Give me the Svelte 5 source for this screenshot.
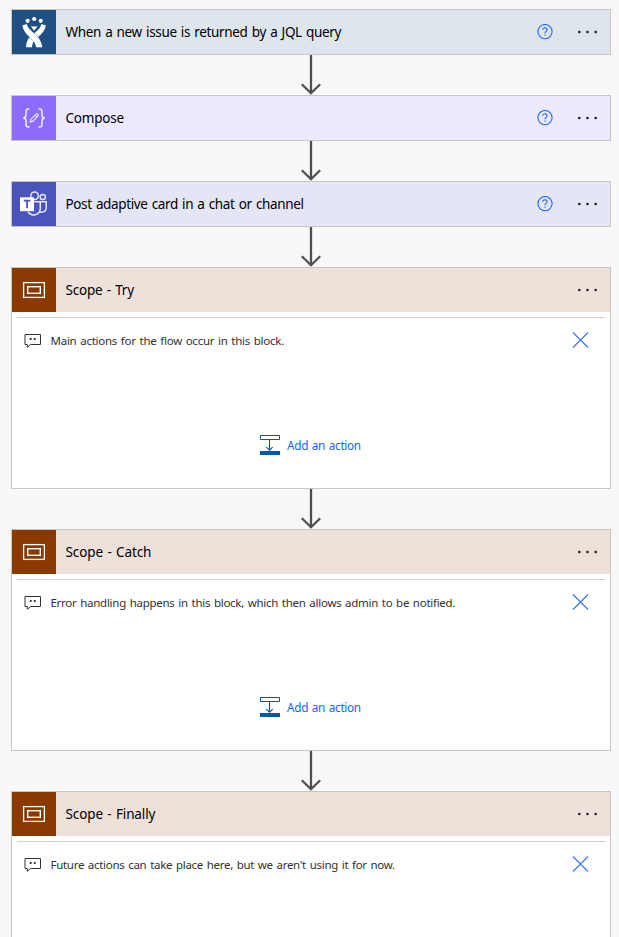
<script>
  const steps = [
    { kind: 'jira', title: 'When a new issue is returned by a JQL query', spacing: -0.34 },
    { kind: 'compose', title: 'Compose', spacing: -0.2 },
    { kind: 'teams', title: 'Post adaptive card in a chat or channel', spacing: -0.36 },
    { kind: 'scope', title: 'Scope - Try', spacing: -0.2, note: 'Main actions for the flow occur in this block.', noteSpacing: -0.25, canAdd: true },
    { kind: 'scope', title: 'Scope - Catch', spacing: -0.1, note: 'Error handling happens in this block, which then allows admin to be notified.', noteSpacing: -0.27, canAdd: true },
    { kind: 'scope', title: 'Scope - Finally', spacing: -0.12, note: "Future actions can take place here, but we aren't using it for now.", noteSpacing: -0.285 }
  ];
</script>

<main>
  {#each steps as step, i}
    {#if i > 0}
      <svg class="arrow" width="24" height="40" viewBox="0 0 24 40">
        <path d="M12 0V38M2.8 29.2L12 38.2L21.2 29.2" fill="none" stroke="#505050" stroke-width="2.3" />
      </svg>
    {/if}
    <section class="card {step.kind}" class:block={step.note}>
      <header>
        <div class="tile">
          {#if step.kind === 'jira'}
            <svg width="44" height="44" viewBox="0 0 44 44" fill="#fff">
              <circle cx="15.6" cy="10.8" r="2.1" />
              <circle cx="22.2" cy="9" r="2.1" />
              <circle cx="28.7" cy="10.8" r="2.1" />
              <path d="M19 16Q22.2 17.2 25.4 16Q24.4 18.7 22.2 20.4Q20 18.7 19 16Z" />
              <path d="M10.3 15.4L14.8 14C15.8 18.3 19 20.5 22.5 23.6C27 27.6 29.6 32 30.3 37.2H24.2C23.4 32.9 21 30.2 18 27.4C14 23.7 11.2 20.2 10.3 15.4Z" />
              <path d="M33.9 15.4L29.5 14C28.4 18 26 20 22.4 23.2L26.4 26.8C30.4 22.9 33 20.2 33.9 15.4ZM17.3 27.2C15.3 30 14.3 33 14 37.2H20C20.2 34.7 20.7 33 21.6 31.2Z" />
            </svg>
          {:else if step.kind === 'compose'}
            <svg width="44" height="44" viewBox="0 0 44 44" fill="none" stroke="#f0ebff" stroke-width="1.5">
              <path d="M17.5 13H16.5Q14 13 14 15.5V19Q14 21.8 11.3 22Q14 22.2 14 25V28.5Q14 31 16.5 31H17.5M26.5 13H27.5Q30 13 30 15.5V19Q30 21.8 32.7 22Q30 22.2 30 25V28.5Q30 31 27.5 31H26.5" />
              <path d="M18.3 25.9L19 23.2L24.2 18Q25.2 17.4 26 18.2Q26.8 19 26.1 20L20.9 25.2ZM23.2 19L25.1 20.9" stroke-width="1.15" />
            </svg>
          {:else if step.kind === 'teams'}
            <svg width="44" height="44" viewBox="0 0 44 44">
              <g fill="none" stroke="#e6e7f8" stroke-width="1.5">
                <circle cx="22.6" cy="13.8" r="3.8" />
                <circle cx="30.8" cy="15" r="2.6" />
                <path d="M22 19.8H28.3V26.5A6.6 6.6 0 0 1 16 29.6M28.3 19.8H34.2V26Q34 30.3 29.2 30.2L28 30" />
              </g>
              <path d="M8 15.3H22V29.2H8Z" fill="#fff" />
              <path d="M11.8 18.7H18.4M15.1 18.7V26.2" fill="none" stroke="#4b53bc" stroke-width="1.8" />
            </svg>
          {:else}
            <svg width="44" height="44" viewBox="0 0 44 44" fill="none" stroke="#fff">
              <rect x="11.6" y="14.6" width="20.8" height="14.8" stroke-width="1.3" />
              <rect x="15.7" y="18.7" width="12.6" height="6.6" stroke-width="1.4" />
            </svg>
          {/if}
        </div>
        <h2 style="letter-spacing: {step.spacing}px">{step.title}</h2>
        {#if !step.note}
          <svg class="help" width="16" height="16" viewBox="0 0 16 16" fill="none" stroke="#1b67f8">
            <circle cx="8" cy="7.6" r="7.1" stroke-width="1.1" />
            <path d="M5.8 5.7Q5.9 3.7 8 3.7Q10.2 3.8 10.2 5.6Q10.2 6.6 9 7.4Q8 8.1 8 9.3M8 10.4V11.8" stroke-width="1.1" />
          </svg>
        {/if}
        <svg class="more" width="22" height="4" viewBox="0 0 22 4" fill="#222">
          <circle cx="2.3" cy="2" r="1.35" /><circle cx="10.5" cy="2" r="1.35" /><circle cx="18.7" cy="2" r="1.35" />
        </svg>
      </header>
      {#if step.note}
        <div class="rule"></div>
        <div class="note">
          <svg width="18" height="16" viewBox="0 0 18 16">
            <path d="M1 2.5H16.5V12.5H6.6L3.3 15.3V12.5H1Z" fill="none" stroke="#333" />
            <path d="M5.8 6H7.6V8H5.8ZM9.8 6H11.6V8H9.8Z" fill="#333" />
          </svg>
          <p style="letter-spacing: {step.noteSpacing}px">{step.note}</p>
          <svg class="close" width="16" height="16" viewBox="0 0 16 16">
            <path d="M1 .5L16 15.5M16 .5L1 15.5" stroke="#3b73f5" stroke-width="1.1" />
          </svg>
        </div>
      {/if}
      {#if step.canAdd}
        <div class="add">
          <svg width="20" height="20" viewBox="0 0 20 20" fill="none" stroke="#0058ad">
            <path d="M.5 .5H19.5V4.5H.5Z" />
            <path d="M9.5 5V15M6.3 12.2L9.5 15.2L12.7 12.2" stroke-width="1.1" />
            <path d="M0 16H20V20H0Z" fill="#0058ad" stroke="none" />
          </svg>
          <span>Add an action</span>
        </div>
      {/if}
    </section>
  {/each}
</main>

<style>
  :global(body) { margin: 0; background: #f8f8f8; }
  main {
    box-sizing: border-box;
    width: 619px;
    height: 937px;
    overflow: hidden;
    padding: 9px 8px 0 11px;
    display: flex;
    flex-direction: column;
    background: #f8f8f8;
    font-family: "Noto Sans", "Open Sans", sans-serif;
    word-spacing: 1px;
  }
  .card {
    box-sizing: border-box;
    flex: none;
    width: 600px;
    height: 46px;
    border: 1px solid #c8c6c4;
    background: #fff;
  }
  .block { height: 222px; }
  .arrow { flex: none; display: block; margin-left: 288px; }
  header { display: flex; align-items: center; height: 44px; padding-right: 12px; }
  .tile { width: 44px; height: 44px; flex: none; }
  .tile svg { display: block; }
  .jira .tile { background: #205081; }
  .jira header { background: #dee5ec; }
  .compose .tile { background: #8c6cff; }
  .compose header { background: #eee9ff; }
  .teams .tile { background: #4b53bc; }
  .teams header { background: #e4e5f5; }
  .scope .tile { background: #8c3900; }
  .scope header { background: #eee1da; }
  h2 {
    flex: 1;
    margin: 0 0 0 9.5px;
    font-size: 13.5px;
    line-height: 20px;
    font-weight: 400;
    color: #000;
    white-space: nowrap;
  }
  .help { margin-right: 24px; }
  .more { margin-right: -1px; }
  .rule { height: 1px; margin: 5px 5px 0; background: #d2d0ce; }
  .note { display: flex; align-items: center; height: 44px; padding: 0 22px 0 12px; }
  .note .close { overflow: visible; }
  .note p {
    flex: 1;
    margin: 2px 0 0 8.5px;
    font-size: 11.5px;
    line-height: 18px;
    color: #323130;
    white-space: nowrap;
  }
  .add { display: flex; align-items: center; height: 20px; margin: 73px 0 0 248px; }
  .add span {
    margin: 0 0 0 7px;
    font-size: 11.8px;
    line-height: 18px;
    letter-spacing: -0.33px;
    color: #1566f5;
    white-space: nowrap;
  }
</style>
